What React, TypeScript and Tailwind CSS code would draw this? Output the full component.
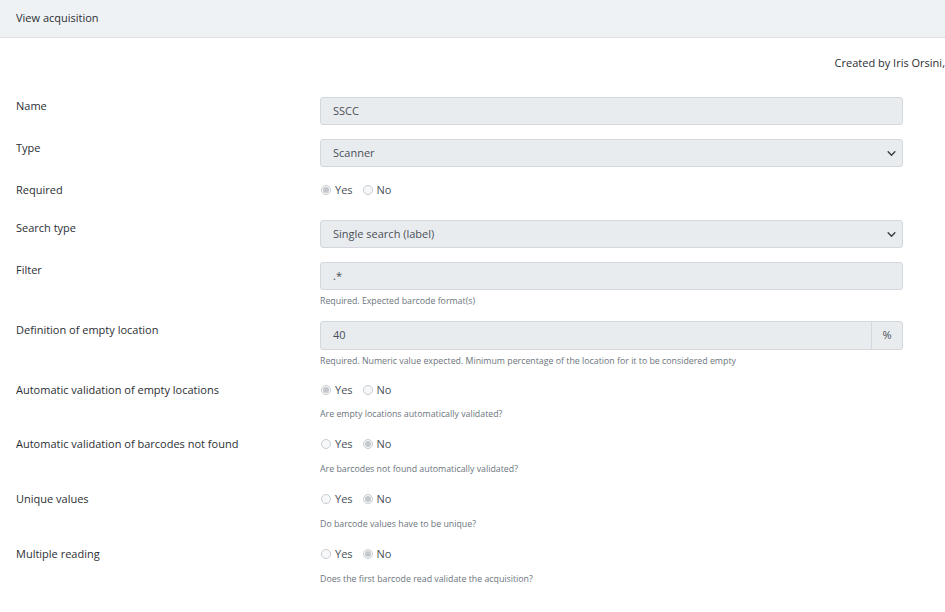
import React from 'react';

type RowProps = {
  label: string;
  mt: string;
  labelPad?: string;
  children: React.ReactNode;
  help?: string;
  helpMt?: string;
};

const Row: React.FC<RowProps> = ({ label, mt, labelPad = 'pt-0', children, help, helpMt = 'mt-[5px]' }) => (
  <div className={`flex ${mt}`}>
    <div className={`w-[320px] shrink-0 pl-4 text-[11px] leading-4 text-[#2b2f33] ${labelPad}`}>{label}</div>
    <div className="flex-1 mr-[42px]">
      {children}
      {help && <div className={`${helpMt} text-[8.8px] leading-3 text-[#6c757d]`}>{help}</div>}
    </div>
  </div>
);

const Radio: React.FC<{ checked?: boolean; label: string }> = ({ checked, label }) => (
  <span className="flex items-center gap-[4px]">
    <span className="w-[10px] h-[10px] rounded-full border border-[#c9cdd1] bg-[#f7f8f9] flex items-center justify-center">
      {checked && <span className="w-[6px] h-[6px] rounded-full bg-[#c4c8cc]" />}
    </span>
    <span className="text-[11px] text-[#495057]">{label}</span>
  </span>
);

const YesNo: React.FC<{ yes?: boolean }> = ({ yes }) => (
  <div className="flex items-center gap-[10px] h-4 pl-[1px]">
    <Radio checked={yes} label="Yes" />
    <Radio checked={!yes} label="No" />
  </div>
);

const Chevron = () => (
  <svg width="11" height="9" viewBox="0 0 16 16" className="text-[#343a40]">
    <path d="M2 5l6 6 6-6" fill="none" stroke="currentColor" strokeWidth="2.4" strokeLinecap="round" strokeLinejoin="round" />
  </svg>
);

const Field: React.FC<{ value: string; select?: boolean; h?: string }> = ({ value, select, h = 'h-[28px]' }) => (
  <div className={`${h} rounded-[3px] border border-[#d4d8dc] bg-[#e9ecef] flex items-center justify-between pl-[12px] pr-[5px] text-[11px] text-[#495057]`}>
    <span>{value}</span>
    {select && <Chevron />}
  </div>
);

export default function App() {
  return (
    <div className="w-[945px] h-[612px] bg-white overflow-hidden" style={{ fontFamily: '"Open Sans", "Noto Sans", sans-serif' }}>
      <div className="h-[38px] bg-[#eff2f5] border-b border-[#dde1e5] flex items-center pl-4 text-[11px] text-[#2b2f33]">
        View acquisition
      </div>

      <div className="mt-[17px] flex justify-end pr-0 text-[11px] leading-4 text-[#2b2f33] whitespace-nowrap">
        Created by Iris Orsini,
      </div>

      <Row label="Name" mt="mt-[26px]" labelPad="pt-[1px]">
        <Field value="SSCC" />
      </Row>

      <Row label="Type" mt="mt-[14px]" labelPad="pt-[1px]">
        <Field value="Scanner" select />
      </Row>

      <Row label="Required" mt="mt-[15px]">
        <YesNo yes />
      </Row>

      <Row label="Search type" mt="mt-[22px]">
        <Field value="Single search (label)" select />
      </Row>

      <Row label="Filter" mt="mt-[14px]" help="Required. Expected barcode format(s)">
        <Field value=".*" />
      </Row>

      <Row label="Definition of empty location" mt="mt-[14px]" labelPad="pt-[1px]" help="Required. Numeric value expected. Minimum percentage of the location for it to be considered empty">
        <div className="h-[29px] flex rounded-[3px] border border-[#d4d8dc] bg-[#e9ecef] text-[11px] text-[#495057]">
          <div className="flex-1 flex items-center pl-[12px]">40</div>
          <div className="w-[31px] border-l border-[#d4d8dc] flex items-center justify-center">%</div>
        </div>
      </Row>

      <Row label="Automatic validation of empty locations" mt="mt-[15px]" help="Are empty locations automatically validated?" helpMt="mt-[10px]">
        <YesNo yes />
      </Row>

      <Row label="Automatic validation of barcodes not found" mt="mt-[16px]" help="Are barcodes not found automatically validated?" helpMt="mt-[11px]">
        <YesNo />
      </Row>

      <Row label="Unique values" mt="mt-[16px]" help="Do barcode values have to be unique?" helpMt="mt-[11px]">
        <YesNo />
      </Row>

      <Row label="Multiple reading" mt="mt-[16px]" help="Does the first barcode read validate the acquisition?" helpMt="mt-[11px]">
        <YesNo />
      </Row>
    </div>
  );
}
